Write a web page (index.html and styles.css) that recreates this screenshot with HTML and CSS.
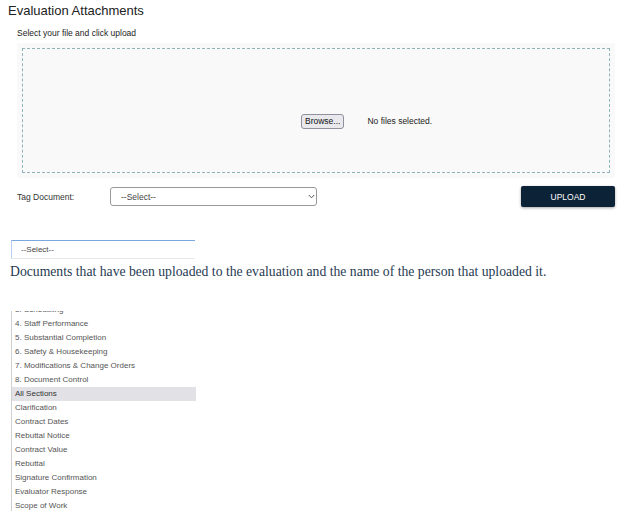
FILE: index.html
```html
<!DOCTYPE html>
<html>
<head>
<meta charset="utf-8">
<link rel="stylesheet" href="styles.css">
</head>
<body>
<h1 class="title">Evaluation Attachments</h1>
<div class="panel">
  <p class="hint">Select your file and click upload</p>
  <div class="drop-outer">
    <div class="drop">
      <span class="browse">Browse...</span>
      <span class="nofile">No files selected.</span>
    </div>
  </div>
  <div class="tag-row">
    <label class="tag-label">Tag Document:</label>
    <div class="select tag-select"><span>--Select--</span><svg class="chev" width="7" height="5" viewBox="0 0 7 5"><path d="M0.8 1 L3.5 3.8 L6.2 1" fill="none" stroke="#555" stroke-width="1"/></svg></div>
    <button class="upload">UPLOAD</button>
  </div>
</div>
<div class="select filter-select"><span>--Select--</span></div>
<p class="desc">Documents that have been uploaded to the evaluation and the name of the person that uploaded it.</p>
<div class="list">
  <div class="list-inner">
    <div class="item">3. Scheduling</div>
    <div class="item">4. Staff Performance</div>
    <div class="item">5. Substantial Completion</div>
    <div class="item">6. Safety &amp; Housekeeping</div>
    <div class="item">7. Modifications &amp; Change Orders</div>
    <div class="item">8. Document Control</div>
    <div class="item active">All Sections</div>
    <div class="item">Clarification</div>
    <div class="item">Contract Dates</div>
    <div class="item">Rebuttal Notice</div>
    <div class="item">Contract Value</div>
    <div class="item">Rebuttal</div>
    <div class="item">Signature Confirmation</div>
    <div class="item">Evaluator Response</div>
    <div class="item">Scope of Work</div>
  </div>
</div>
</body>
</html>
```

FILE: styles.css
```css
html, body {
  margin: 0;
  padding: 0;
  background: #fff;
  font-family: "Liberation Sans", Arial, sans-serif;
  color: #333;
  overflow: hidden;
}
.title {
  margin: 0;
  padding: 3px 0 0 8px;
  font-size: 13px;
  font-weight: normal;
  color: #222;
  line-height: 16px;
}
.panel {
  padding: 0 5px 0 17px;
}
.hint {
  margin: 9px 0 0 0;
  font-size: 8.5px;
  line-height: 11px;
  color: #222;
}
.drop-outer {
  margin-top: 4px;
  background: #f9f9f9;
  padding: 5px;
}
.drop {
  height: 123px;
  border: 1px dashed #8fb4b8;
  display: flex;
  align-items: flex-start;
  gap: 23px;
  padding-left: 278px;
  box-sizing: content-box;
}
.browse {
  margin-top: 65px;
  font-size: 8.5px;
  color: #111;
  background: #e9e9ed;
  border: 1px solid #8f8f9d;
  border-radius: 3px;
  padding: 1px 3px;
  line-height: 11px;
}
.nofile {
  margin-top: 67px;
  font-size: 8.5px;
  line-height: 11px;
  color: #222;
}
.tag-row {
  display: flex;
  align-items: center;
  margin-top: 8px;
}
.tag-label {
  width: 93px;
  font-size: 8.5px;
  color: #333;
}
.select {
  box-sizing: border-box;
  height: 19px;
  display: flex;
  align-items: center;
  font-size: 8.5px;
  color: #444;
  background: #fff;
}
.tag-select {
  width: 207px;
  border: 1px solid #999;
  border-radius: 3px;
  padding: 0 1px 0 10px;
  justify-content: space-between;
}
.upload {
  margin-left: auto;
  width: 94px;
  height: 21px;
  background: #0c2236;
  color: #fff;
  border: none;
  border-radius: 2px;
  font-family: "Liberation Sans", Arial, sans-serif;
  font-size: 8.5px;
  box-shadow: 0 1px 3px rgba(0,0,0,0.35);
}
.filter-select {
  margin: 33px 0 0 11px;
  width: 184px;
  border-top: 1px solid #7aa7e0;
  border-left: 1px solid #b8cfee;
  border-bottom: 1px solid #e8e8e8;
  padding-left: 9px;
  font-size: 8px;
}
.desc {
  margin: 4px 0 0 10px;
  font-family: "Liberation Serif", "Times New Roman", serif;
  font-size: 13.7px;
  line-height: 18px;
  color: #1f3a52;
}
.list {
  margin: 30px 0 0 11px;
  width: 184px;
  height: 210px;
  overflow: hidden;
  border-left: 1px solid #d0d0d0;
}
.list-inner {
  margin-top: -8px;
}
.item {
  height: 14px;
  line-height: 14px;
  padding-left: 3px;
  font-size: 8px;
  color: #555;
  white-space: nowrap;
}
.item.active {
  background: #e1e1e6;
  color: #333;
}
```
